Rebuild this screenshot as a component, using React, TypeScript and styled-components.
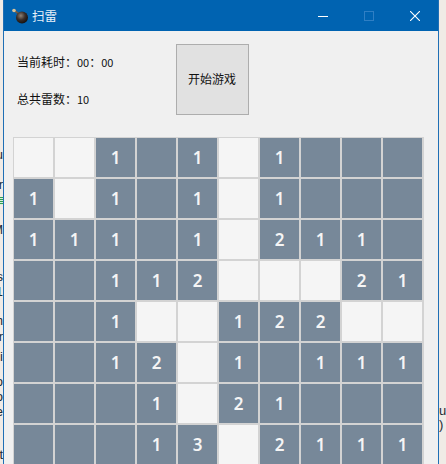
import React from 'react';
import styled, { createGlobalStyle } from 'styled-components';

const GlobalStyle = createGlobalStyle`
  html, body {
    margin: 0;
    padding: 0;
    width: 446px;
    height: 464px;
    overflow: hidden;
    background: #f0ebe6;
  }
`;

const Page = styled.div`
  display: flex;
  width: 446px;
  height: 464px;
  overflow: hidden;
`;

// the window behind this one shows through at both edges
const Gutter = styled.div<{ $width: number; $left?: boolean }>`
  width: ${(p) => p.$width}px;
  flex: none;
  display: flex;
  flex-direction: column;
  align-items: ${(p) => (p.$left ? 'flex-end' : 'flex-start')};
  overflow: hidden;
`;

const Scrap = styled.div<{ $gap: number }>`
  margin-top: ${(p) => p.$gap}px;
  height: 14px;
  flex: none;
  font: 13px/14px 'Liberation Sans', sans-serif;
  color: #1d2a33;
  white-space: pre;
`;

const GreenBars = styled.div<{ $gap: number }>`
  margin-top: ${(p) => p.$gap}px;
  width: 3px;
  height: 8px;
  flex: none;
  background: repeating-linear-gradient(#2e9e4f 0 1px, #d8eedd 1px 2px);
`;

const Window = styled.div`
  width: 436px;
  flex: none;
  height: 464px;
  background: #f0f0f0;
  border-left: 1px solid #1f6fb5;
  border-right: 1px solid #1f6fb5;
  box-sizing: border-box;
  overflow: hidden;
`;

const TitleBar = styled.div`
  height: 31px;
  background: #0063b1;
  display: flex;
  align-items: center;
  padding-left: 8px;
`;

const AppTitle = styled.span`
  margin-left: 2px;
  font: 12.5px 'Noto Sans CJK SC', sans-serif;
  color: #e8f1f9;
  flex: 1;
`;

const WinButton = styled.div`
  width: 46px;
  height: 31px;
  display: flex;
  align-items: center;
  justify-content: center;
`;

const Header = styled.div`
  height: 106px;
  display: flex;
  box-sizing: border-box;
  padding: 13px 0 0 13px;
`;

const Info = styled.div`
  width: 159px;
  padding-top: 9px;
  display: flex;
  flex-direction: column;
  gap: 19px;
`;

const InfoLine = styled.div`
  font: 12px/18px 'Noto Sans CJK SC', sans-serif;
  color: #111;
  white-space: pre;
`;

const Digits = styled.span`
  font-size: 11px;
`;

const StartButton = styled.button`
  width: 73px;
  height: 71px;
  padding: 0 1px 2px 0;
  background: #e1e1e1;
  border: 1px solid #adadad;
  font: 12px 'Noto Sans CJK SC', sans-serif;
  color: #111;
`;

const Board = styled.div`
  margin-left: 9px;
  width: 410px;
  display: grid;
  grid-template-columns: repeat(10, 39px);
  grid-auto-rows: 39px;
  gap: 2px;
  padding: 1px 0 0 1px;
  background: #d3d3d3;
`;

const Cell = styled.div<{ $open: boolean }>`
  background: ${(p) => (p.$open ? '#f5f5f5' : '#778899')};
  color: #f5f5f5;
  font: 600 17px 'Noto Sans', sans-serif;
  display: flex;
  align-items: center;
  justify-content: center;
`;

// o = opened, _ = still covered, digit = mines around
const rows = [
  'oo1_1o1___',
  '1o1_1o1___',
  '111_1o211_',
  '__112ooo21',
  '__1oo122oo',
  '__12o1_111',
  '___1o21___',
  '___13o2111',
];

const leftScraps = [
  { text: 'u', gap: 148 },
  { text: 'r', gap: 16 },
  { bars: true, gap: 5 },
  { text: 'M', gap: 18 },
  { text: 's', gap: 33 },
  { text: '1', gap: 1 },
  { text: 'm', gap: 15 },
  { text: 'r', gap: 2 },
  { text: 'i', gap: 6 },
  { text: 'o', gap: 11 },
  { text: 'o', gap: 1 },
  { text: 'e', gap: 1 },
  { text: 't', gap: 29 },
];

const Bomb = () => (
  <svg width="18" height="18" viewBox="0 0 18 18">
    <defs>
      <radialGradient id="bombBody" cx="0.4" cy="0.35" r="0.7">
        <stop offset="0" stopColor="#8d8175" />
        <stop offset="0.5" stopColor="#3a2f2a" />
        <stop offset="1" stopColor="#120d0b" />
      </radialGradient>
    </defs>
    <line x1="2.5" y1="3.5" x2="8" y2="8" stroke="#6b5a48" strokeWidth="2" />
    <circle cx="2" cy="3.5" r="1.8" fill="#d8c49a" />
    <circle cx="10" cy="10.5" r="6" fill="url(#bombBody)" />
  </svg>
);

export default function App() {
  return (
    <Page>
      <GlobalStyle />
      <Gutter $width={3} $left>
        {leftScraps.map((s, i) =>
          s.bars ? <GreenBars key={i} $gap={s.gap} /> : <Scrap key={i} $gap={s.gap}>{s.text}</Scrap>
        )}
      </Gutter>
      <Window>
        <TitleBar>
          <Bomb />
          <AppTitle>扫雷</AppTitle>
          <WinButton>
            <svg width="10" height="10" viewBox="0 0 10 10">
              <line x1="0" y1="5.5" x2="10" y2="5.5" stroke="#fff" strokeWidth="1" />
            </svg>
          </WinButton>
          <WinButton>
            <svg width="10" height="10" viewBox="0 0 10 10">
              <rect x="0.5" y="0.5" width="9" height="9" fill="none" stroke="#2f7fc4" strokeWidth="1" />
            </svg>
          </WinButton>
          <WinButton>
            <svg width="10" height="10" viewBox="0 0 10 10">
              <path d="M0 0 L10 10 M10 0 L0 10" stroke="#fff" strokeWidth="1.1" />
            </svg>
          </WinButton>
        </TitleBar>
        <Header>
          <Info>
            <InfoLine>当前耗时：<Digits>00</Digits>：<Digits>00</Digits></InfoLine>
            <InfoLine>总共雷数：<Digits>10</Digits></InfoLine>
          </Info>
          <StartButton>开始游戏</StartButton>
        </Header>
        <Board>
          {rows.join('').split('').map((c, i) => (
            <Cell key={i} $open={c === 'o'}>
              {c !== 'o' && c !== '_' ? c : ''}
            </Cell>
          ))}
        </Board>
      </Window>
      <Gutter $width={7}>
        <Scrap $gap={404}>u</Scrap>
        <Scrap $gap={0}>)</Scrap>
      </Gutter>
    </Page>
  );
}
